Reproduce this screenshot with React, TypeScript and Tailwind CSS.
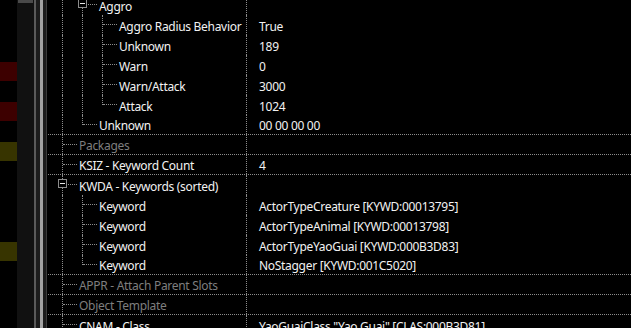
import React from 'react';

type Line = 'none' | 'full' | 'top';

interface TreeRow {
  label: string;
  value?: string;
  depth: number;
  box?: boolean;
  line: Line;
  disabled?: boolean;
  sep?: boolean;
}

const rows: TreeRow[] = [
  { label: 'Aggro', depth: 1, box: true, line: 'full' },
  { label: 'Aggro Radius Behavior', value: 'True', depth: 2, line: 'full' },
  { label: 'Unknown', value: '189', depth: 2, line: 'full' },
  { label: 'Warn', value: '0', depth: 2, line: 'full' },
  { label: 'Warn/Attack', value: '3000', depth: 2, line: 'full' },
  { label: 'Attack', value: '1024', depth: 2, line: 'top' },
  { label: 'Unknown', value: '00 00 00 00', depth: 1, line: 'top', sep: true },
  { label: 'Packages', depth: 0, line: 'full', disabled: true, sep: true },
  { label: 'KSIZ - Keyword Count', value: '4', depth: 0, line: 'full', sep: true },
  { label: 'KWDA - Keywords (sorted)', depth: 0, box: true, line: 'full' },
  { label: 'Keyword', value: 'ActorTypeCreature [KYWD:00013795]', depth: 1, line: 'full' },
  { label: 'Keyword', value: 'ActorTypeAnimal [KYWD:00013798]', depth: 1, line: 'full' },
  { label: 'Keyword', value: 'ActorTypeYaoGuai [KYWD:000B3D83]', depth: 1, line: 'full' },
  { label: 'Keyword', value: 'NoStagger [KYWD:001C5020]', depth: 1, line: 'top', sep: true },
  { label: 'APPR - Attach Parent Slots', depth: 0, line: 'full', disabled: true, sep: true },
  { label: 'Object Template', depth: 0, line: 'full', disabled: true, sep: true },
  { label: 'CNAM - Class', value: 'YaoGuaiClass "Yao Guai" [CLAS:000B3D81]', depth: 0, line: 'full' },
];

// colour markers of the record list on the far left
const marks = ['', '', '', 'r', '', 'r', '', 'y', '', '', '', '', 'y', '', '', '', ''];

function Guide() {
  return (
    <div className="relative w-[20px] h-full shrink-0">
      <span className="absolute left-[10px] top-0 bottom-0 border-l border-dotted border-[#8c8c8c]" />
    </div>
  );
}

function Node({ row }: { row: TreeRow }) {
  return (
    <div className="relative w-[27px] h-full shrink-0">
      {row.line !== 'none' && (
        <span
          className={
            row.line === 'full'
              ? 'absolute left-[10px] top-0 bottom-0 border-l border-dotted border-[#8c8c8c]'
              : 'absolute left-[10px] top-0 h-[10px] border-l border-dotted border-[#8c8c8c]'
          }
        />
      )}
      <span className="absolute left-[11px] top-[9px] w-[14px] border-t border-dotted border-[#8c8c8c]" />
      {row.box && (
        <span className="absolute left-[6px] top-[4px] w-[9px] h-[9px] border border-[#8c8c8c] bg-black flex items-center justify-center">
          <span className="w-[5px] h-px bg-[#e6e6e6]" />
        </span>
      )}
    </div>
  );
}

export default function App() {
  return (
    <div
      className="w-[631px] h-[328px] bg-black overflow-hidden flex text-[12px] leading-none tracking-[-0.3px]"
      style={{ fontFamily: '"Noto Sans", "Liberation Sans", sans-serif' }}
    >
      {/* record list colour column */}
      <div className="w-[17px] shrink-0 pt-[2px] flex flex-col">
        {marks.map((m, i) => (
          <div key={i} className="h-[20px] shrink-0 pb-px">
            <div
              className={
                m === 'r' ? 'h-full bg-[#3d0000]' : m === 'y' ? 'h-full bg-[#373400]' : 'h-full'
              }
            />
          </div>
        ))}
      </div>

      {/* scrollbar */}
      <div className="w-[17px] shrink-0 bg-[#111111] px-px">
        <div className="h-[3px] bg-[#4a4a4a]" />
      </div>

      {/* splitter */}
      <div className="w-[2px] shrink-0 bg-[#5a5a5a]" />
      <div className="w-[4px] shrink-0 bg-[#1c1c1c]" />
      <div className="w-[3px] shrink-0 bg-[#a3a3a3]" />
      <div className="w-[3px] shrink-0 bg-[#1c1c1c]" />
      <div className="w-px shrink-0 bg-[#3a3a3a]" />
      <div className="w-px shrink-0" />

      {/* record tree */}
      <div className="flex-1 flex flex-col -mt-[5px]">
        {rows.map((row, i) => (
          <div
            key={i}
            className={`h-[20px] shrink-0 flex ${row.sep ? 'border-b border-dotted border-[#8c8c8c]' : ''}`}
          >
            <div className="w-[198px] shrink-0 flex pl-[4px] h-full">
              {Array.from({ length: row.depth }).map((_, j) => (
                <Guide key={j} />
              ))}
              <Node row={row} />
              <span
                className={`whitespace-nowrap self-center pt-[3px] ${row.disabled ? 'text-[#7e7e7e]' : 'text-[#f2f2f2]'}`}
              >
                {row.label}
              </span>
            </div>
            <div className="flex-1 h-full border-l border-dotted border-[#8c8c8c] pl-[12px] flex items-center">
              {row.value && <span className="whitespace-nowrap text-[#f2f2f2] pt-[3px]">{row.value}</span>}
            </div>
          </div>
        ))}
      </div>
    </div>
  );
}
